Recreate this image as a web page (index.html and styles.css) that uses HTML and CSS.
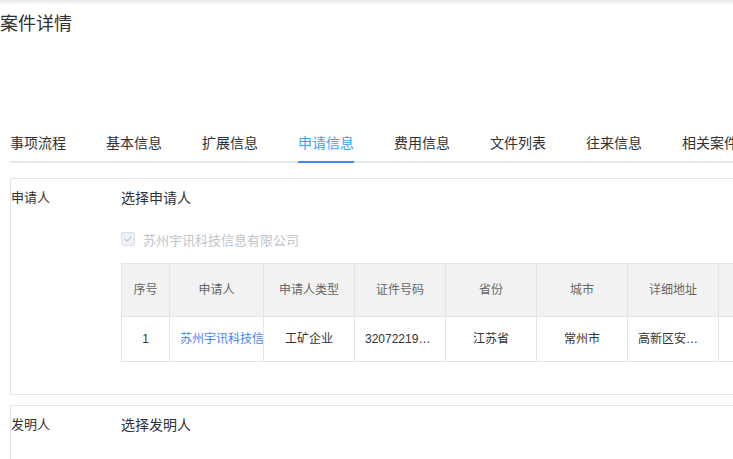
FILE: index.html
```html
<!DOCTYPE html>
<html lang="zh-CN">
<head>
<meta charset="utf-8">
<title>案件详情</title>
<link rel="stylesheet" href="styles.css">
</head>
<body>
<div class="topbar"></div>
<h1 class="title">案件详情</h1>
<div class="main">
  <nav class="tabs">
    <div class="tab tab-first"><span class="tab-text">事项流程</span></div>
    <div class="tab"><span class="tab-text">基本信息</span></div>
    <div class="tab"><span class="tab-text">扩展信息</span></div>
    <div class="tab tab-active"><span class="tab-text">申请信息</span></div>
    <div class="tab"><span class="tab-text">费用信息</span></div>
    <div class="tab"><span class="tab-text">文件列表</span></div>
    <div class="tab"><span class="tab-text">往来信息</span></div>
    <div class="tab"><span class="tab-text">相关案件</span></div>
  </nav>

  <section class="panel">
    <div class="panel-label">申请人</div>
    <div class="panel-body">
      <div class="select-title">选择申请人</div>
      <label class="check">
        <span class="check-box">
          <svg width="12" height="12" viewBox="0 0 12 12"><path d="M3 6.2 L5.2 8.3 L9.2 3.8" fill="none" stroke="#c0c4cc" stroke-width="1.1"/></svg>
        </span>
        <span class="check-label">苏州宇讯科技信息有限公司</span>
      </label>
      <div class="grid">
        <div class="cell head">序号</div>
        <div class="cell head">申请人</div>
        <div class="cell head">申请人类型</div>
        <div class="cell head">证件号码</div>
        <div class="cell head">省份</div>
        <div class="cell head">城市</div>
        <div class="cell head">详细地址</div>
        <div class="cell head">邮编</div>
        <div class="cell head">操作</div>

        <div class="cell">1</div>
        <div class="cell cell-clip"><a class="link">苏州宇讯科技信息有限公司</a></div>
        <div class="cell">工矿企业</div>
        <div class="cell">320722199001011234</div>
        <div class="cell">江苏省</div>
        <div class="cell">常州市</div>
        <div class="cell">高新区安家路88号</div>
        <div class="cell">213000</div>
        <div class="cell">删除</div>
      </div>
    </div>
  </section>

  <section class="panel">
    <div class="panel-label">发明人</div>
    <div class="panel-body">
      <div class="select-title">选择发明人</div>
    </div>
  </section>
</div>
</body>
</html>
```

FILE: styles.css
```css
html, body {
  margin: 0;
  padding: 0;
  overflow: hidden;
  background: #ffffff;
}

body {
  font-family: "Liberation Sans", "Noto Sans CJK SC", sans-serif;
  color: #303133;
  width: 733px;
  height: 459px;
}

.topbar {
  height: 4px;
  background: linear-gradient(#e9e9e9, #fafafa);
}

.title {
  margin: 0;
  padding-top: 7px;
  font-size: 18px;
  font-weight: normal;
  line-height: 26px;
  color: #303133;
}

.main {
  width: 1100px;
  padding-left: 10px;
  margin-top: 86px;
}

.tabs {
  display: flex;
  height: 40px;
  box-shadow: inset 0 -2px 0 #e4e7ed;
}

.tab {
  padding: 0 20px;
  height: 40px;
  line-height: 40px;
  font-size: 14px;
  color: #303133;
  white-space: nowrap;
}

.tab-first {
  padding-left: 0;
}

.tab-text {
  display: inline-block;
  height: 40px;
}

.tab-active .tab-text {
  color: #409eff;
  box-shadow: inset 0 -2px 0 #3f88ec;
}

.panel {
  display: flex;
  margin-top: 15px;
  border: 1px solid #e4e4e4;
  border-right: none;
}

.panel + .panel {
  margin-top: 10px;
  height: 120px;
}

.panel-label {
  width: 110px;
  flex: none;
  padding-top: 8px;
  line-height: 22px;
  font-size: 13px;
  color: #303133;
}

.panel-body {
  flex: 1;
  min-width: 0;
  padding-top: 8px;
  padding-bottom: 32px;
}

.select-title {
  font-size: 14px;
  line-height: 22px;
  color: #303133;
}

.check {
  display: flex;
  align-items: center;
  height: 20px;
  margin-top: 20px;
}

.check-box {
  width: 14px;
  height: 14px;
  box-sizing: border-box;
  border: 1px solid #dcdfe6;
  border-radius: 2px;
  background: #edf2fc;
  display: flex;
  align-items: center;
  justify-content: center;
}

.check-label {
  margin-left: 8px;
  font-size: 13px;
  color: #c0c4cc;
}

.grid {
  display: grid;
  grid-template-columns: 48px 94px repeat(7, 91px);
  margin-top: 14px;
  width: max-content;
  border-top: 1px solid #e4e4e4;
  border-left: 1px solid #e4e4e4;
}

.cell {
  box-sizing: border-box;
  height: 45px;
  line-height: 44px;
  padding: 0 10px;
  border-right: 1px solid #e4e4e4;
  border-bottom: 1px solid #e4e4e4;
  font-size: 12px;
  color: #333333;
  text-align: center;
  white-space: nowrap;
  overflow: hidden;
  text-overflow: ellipsis;
}

.cell.head {
  height: 53px;
  line-height: 52px;
  background: #f2f2f2;
  color: #666666;
}

.cell-clip {
  text-overflow: clip;
}

.link {
  color: #4a86f0;
}
```
